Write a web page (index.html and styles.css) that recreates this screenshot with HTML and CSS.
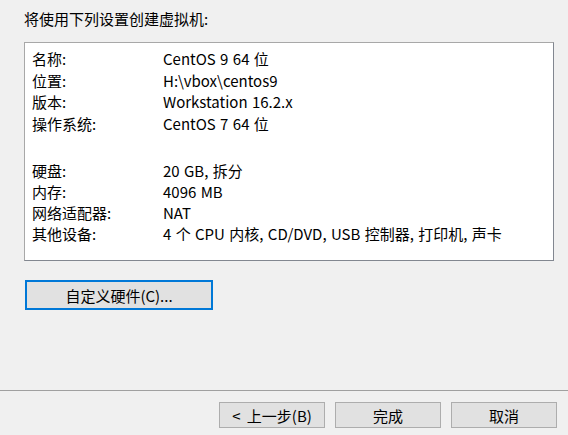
FILE: index.html
```html
<!DOCTYPE html>
<html lang="zh-CN">
<head>
<meta charset="utf-8">
<title>新建虚拟机向导</title>
<link rel="stylesheet" href="styles.css">
</head>
<body>
<div class="dialog">
  <div class="content">
    <div class="title">将使用下列设置创建虚拟机:</div>
    <div class="summary">
      <div class="group">
        <div class="row"><span class="label">名称:</span><span class="value">CentOS 9 64 位</span></div>
        <div class="row"><span class="label">位置:</span><span class="value">H:\vbox\centos9</span></div>
        <div class="row"><span class="label">版本:</span><span class="value">Workstation 16.2.x</span></div>
        <div class="row"><span class="label">操作系统:</span><span class="value">CentOS 7 64 位</span></div>
      </div>
      <div class="group">
        <div class="row"><span class="label">硬盘:</span><span class="value">20 GB, 拆分</span></div>
        <div class="row"><span class="label">内存:</span><span class="value">4096 MB</span></div>
        <div class="row"><span class="label">网络适配器:</span><span class="value">NAT</span></div>
        <div class="row"><span class="label">其他设备:</span><span class="value">4 个 CPU 内核, CD/DVD, USB 控制器, 打印机, 声卡</span></div>
      </div>
    </div>
    <button class="btn btn-custom">自定义硬件(C)...</button>
  </div>
  <div class="footer">
    <button class="btn btn-nav btn-back">&lt; 上一步(B)</button>
    <button class="btn btn-nav">完成</button>
    <button class="btn btn-nav">取消</button>
  </div>
</div>
</body>
</html>
```

FILE: styles.css
```css
html, body {
  margin: 0;
  padding: 0;
  background: #f0f0f0;
}

body {
  font-family: "Noto Sans CJK SC", "Noto Sans", sans-serif;
  font-size: 15px;
  color: #000;
}

.dialog {
  width: 568px;
  height: 435px;
  display: flex;
  flex-direction: column;
}

.content {
  flex: 1;
  padding: 8px 0 0 24px;
  display: flex;
  flex-direction: column;
  align-items: flex-start;
}

.title {
  line-height: 21px;
  margin-bottom: 13px;
}

.summary {
  box-sizing: border-box;
  width: 530px;
  height: 219px;
  background: #fff;
  border: 1px solid #828790;
  border-top-color: #a8a8a8;
  border-left-color: #a8a8a8;
  padding: 5px 0 0 7px;
  display: flex;
  flex-direction: column;
  gap: 26px;
}

.row {
  display: flex;
  line-height: 21.5px;
  height: 21.5px;
  white-space: nowrap;
}

.group + .group .row {
  line-height: 21px;
  height: 21px;
}

.label {
  width: 131px;
  flex: none;
}

.value {
  word-spacing: 1px;
}

.btn {
  font-family: inherit;
  font-size: 15px;
  color: #000;
  background: #e1e1e1;
  border: 1px solid #adadad;
  border-radius: 0;
  padding: 0;
  margin: 0;
  box-sizing: border-box;
  display: flex;
  align-items: center;
  justify-content: center;
}

.btn-custom {
  margin: 19px 0 0 1px;
  width: 188px;
  height: 30px;
  border: 2px solid #0078d7;
}

.footer {
  box-sizing: border-box;
  height: 45px;
  border-top: 1px solid #a0a0a0;
  display: flex;
  justify-content: flex-end;
  gap: 10px;
  padding: 11px 11px 0 0;
}

.btn-nav {
  width: 106px;
  height: 26px;
}

.btn-back {
  word-spacing: 3px;
}
```
